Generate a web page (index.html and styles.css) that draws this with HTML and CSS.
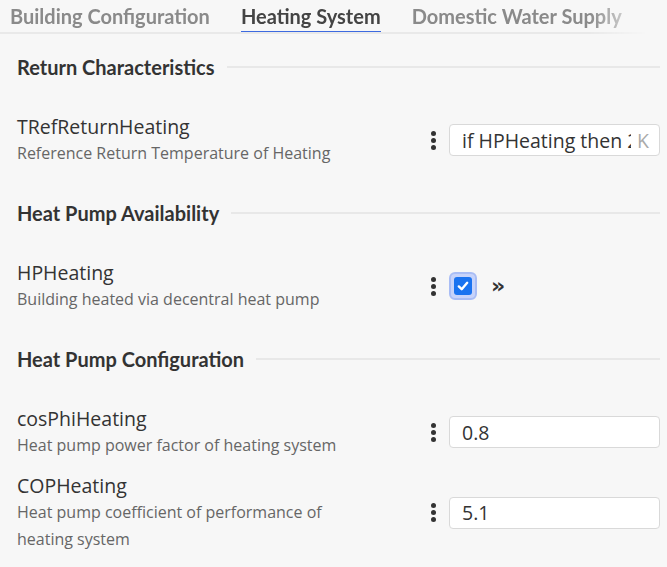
FILE: index.html
```html
<!DOCTYPE html>
<html>
<head>
<meta charset="utf-8">
<link rel="stylesheet" href="styles.css">
</head>
<body>
<div class="tabs">
  <div class="tab">Building Configuration</div>
  <div class="tab active">Heating System</div>
  <div class="tab">Domestic Water Supply</div>
</div>
<div class="content">
  <section class="section">
    <h2 class="section-title">Return Characteristics</h2>
    <div class="row">
      <div class="info">
        <div class="label">TRefReturnHeating</div>
        <div class="desc">Reference Return Temperature of Heating</div>
      </div>
      <div class="kebab"><span></span><span></span><span></span></div>
      <div class="field"><span class="value">if HPHeating then 2</span><span class="unit">K</span></div>
    </div>
  </section>
  <section class="section">
    <h2 class="section-title">Heat Pump Availability</h2>
    <div class="row">
      <div class="info">
        <div class="label">HPHeating</div>
        <div class="desc">Building heated via decentral heat pump</div>
      </div>
      <div class="kebab"><span></span><span></span><span></span></div>
      <div class="check-wrap">
        <div class="check-ring"><div class="check">
          <svg width="14" height="14" viewBox="0 0 14 14"><path d="M2.8 7.4 L5.7 10.2 L11.2 3.8" fill="none" stroke="#fff" stroke-width="2.4" stroke-linecap="round" stroke-linejoin="round"/></svg>
        </div></div>
        <span class="chev">»</span>
      </div>
    </div>
  </section>
  <section class="section">
    <h2 class="section-title">Heat Pump Configuration</h2>
    <div class="row">
      <div class="info">
        <div class="label">cosPhiHeating</div>
        <div class="desc">Heat pump power factor of heating system</div>
      </div>
      <div class="kebab"><span></span><span></span><span></span></div>
      <div class="field"><span class="value">0.8</span></div>
    </div>
    <div class="row">
      <div class="info">
        <div class="label">COPHeating</div>
        <div class="desc">Heat pump coefficient of performance of heating system</div>
      </div>
      <div class="kebab"><span></span><span></span><span></span></div>
      <div class="field"><span class="value">5.1</span></div>
    </div>
  </section>
</div>
</body>
</html>
```
FILE: styles.css
```css
html, body {
  margin: 0;
  padding: 0;
  background: #f7f7f7;
  font-family: "Open Sans", "Liberation Sans", sans-serif;
  color: #333;
}
.tabs {
  display: flex;
  gap: 31px;
  width: 636px;
  padding-left: 10px;
  border-bottom: 2px solid #e9e9e9;
  height: 32px;
  overflow: hidden;
  -webkit-mask-image: linear-gradient(to right, #000 590px, transparent 646px);
  mask-image: linear-gradient(to right, #000 590px, transparent 646px);
}
.tab {
  font-family: "Lato", sans-serif;
  font-weight: 700;
  font-size: 20px;
  color: #8a8a8a;
  line-height: 32px;
  white-space: nowrap;
  border-bottom: 3px solid transparent;
  height: 31px;
}
.tab.active {
  color: #444;
  border-bottom-color: #3d6ae0;
}
.content {
  padding: 21px 7px 0 17px;
}
.section {
  margin-bottom: 34px;
}
.section-title {
  margin: 0 0 34px 0;
  display: flex;
  align-items: center;
  gap: 12px;
  font-family: "Lato", sans-serif;
  font-weight: 700;
  font-size: 20px;
  line-height: 24px;
  color: #333;
}
.section-title::after {
  content: "";
  flex: 1;
  height: 2px;
  background: #e8e8e8;
}
.row {
  display: grid;
  grid-template-columns: 1fr 22px 211px;
  align-items: center;
  margin-bottom: 13px;
}
.info {
  padding-right: 70px;
}
.label {
  font-size: 19.5px;
  line-height: 27px;
  color: #333;
  font-weight: 400;
}
.desc {
  font-size: 16px;
  line-height: 27px;
  color: #666;
}
.kebab {
  display: flex;
  flex-direction: column;
  gap: 2px;
  align-items: center;
  width: 12px;
  justify-self: start;
}
.kebab span {
  width: 5px;
  height: 5px;
  border-radius: 50%;
  background: #333;
}
.field {
  box-sizing: border-box;
  height: 32px;
  border: 1px solid #d9d9d9;
  border-radius: 4px;
  background: #fff;
  display: flex;
  align-items: center;
  padding: 0 10px 0 12px;
  font-size: 19.5px;
  color: #333;
  overflow: hidden;
}
.value {
  flex: 1;
  white-space: nowrap;
  overflow: hidden;
}
.unit {
  color: #aaa;
  padding-left: 6px;
}
.check-wrap {
  display: flex;
  align-items: center;
  gap: 14px;
}
.check-ring {
  width: 28px;
  height: 28px;
  box-sizing: border-box;
  border-radius: 6px;
  background: #c7d3fa;
  border: 2px solid #a9bdf5;
  display: flex;
  align-items: center;
  justify-content: center;
}
.check {
  width: 18px;
  height: 18px;
  border-radius: 3px;
  background: #1a73f0;
  display: flex;
  align-items: center;
  justify-content: center;
}
.chev {
  font-family: "DejaVu Sans", sans-serif;
  font-weight: 700;
  font-size: 22px;
  color: #333;
  line-height: 22px;
}
```
